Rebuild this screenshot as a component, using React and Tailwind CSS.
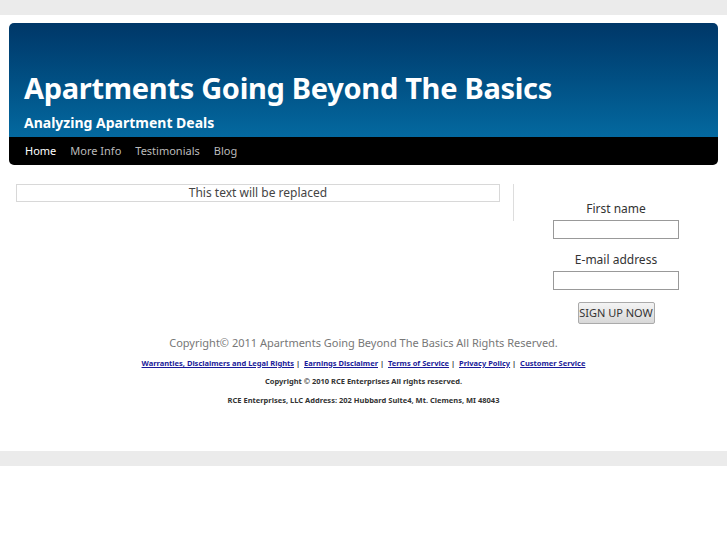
export default function App() {
  const links = ["Warranties, Disclaimers and Legal Rights", "Earnings Disclaimer", "Terms of Service", "Privacy Policy", "Customer Service"];
  return (
    <div className="min-h-[545px] bg-white font-['Liberation_Sans',Arial,sans-serif]">
      <div className="h-[15px] bg-[#ebebeb]" />
      <div className="h-[436px] px-[9px] pt-[8px]">
        <div className="rounded-[5px] overflow-hidden">
          <div className="h-[114px] bg-gradient-to-b from-[#003768] to-[#0469a0] px-[15px] pt-[48px] text-white">
            <h1 className="text-[29px] font-bold leading-[34px] tracking-[-0.3px]">Apartments Going Beyond The Basics</h1>
            <p className="mt-[7px] text-[14px] font-bold">Analyzing Apartment Deals</p>
          </div>
          <div className="flex h-[28px] items-center gap-[14px] bg-black px-[16px] text-[11px]">
            <span className="text-white">Home</span>
            <span className="text-[#bbbbbb]">More Info</span>
            <span className="text-[#bbbbbb]">Testimonials</span>
            <span className="text-[#bbbbbb]">Blog</span>
          </div>
        </div>
        <div className="mt-[19px] flex">
          <div className="w-[484px] ml-[7px]">
            <div className="h-[18px] border border-[#d8d8d8] text-center text-[12px] leading-[16px] text-[#444]">This text will be replaced</div>
          </div>
          <div className="ml-[13px] h-[37px] w-px bg-[#dddddd]" />
          <div className="flex flex-1 flex-col items-center pt-[16px] text-[12px] text-[#333]">
            <label>First name</label>
            <div className="mt-[2px] h-[19px] w-[126px] border border-[#999] bg-white" />
            <label className="mt-[12px]">E-mail address</label>
            <div className="mt-[2px] h-[19px] w-[126px] border border-[#999] bg-white" />
            <button className="mt-[12px] h-[22px] w-[77px] rounded-[2px] border border-[#aaa] bg-gradient-to-b from-[#f4f4f4] to-[#d8d8d8] text-[11px] text-[#333]">SIGN UP NOW</button>
          </div>
        </div>
        <div className="mt-[11px] text-center">
          <p className="text-[11px] text-[#777]">Copyright© 2011 Apartments Going Beyond The Basics All Rights Reserved.</p>
          <p className="mt-[6px] text-[7.5px] font-bold">
            {links.map((l, i) => (
              <span key={l}>
                <a className="text-[#1a1a99] underline">{l}</a>
                {i < links.length - 1 && <span className="text-[#333]"> |&nbsp; </span>}
              </span>
            ))}
          </p>
          <p className="mt-[7px] text-[7.5px] font-bold text-[#333]">Copyright © 2010 RCE Enterprises All rights reserved.</p>
          <p className="mt-[8px] text-[7.5px] font-bold text-[#333]">RCE Enterprises, LLC Address: 202 Hubbard Suite4, Mt. Clemens, MI 48043</p>
        </div>
      </div>
      <div className="h-[15px] bg-[#ebebeb]" />
    </div>
  );
}
